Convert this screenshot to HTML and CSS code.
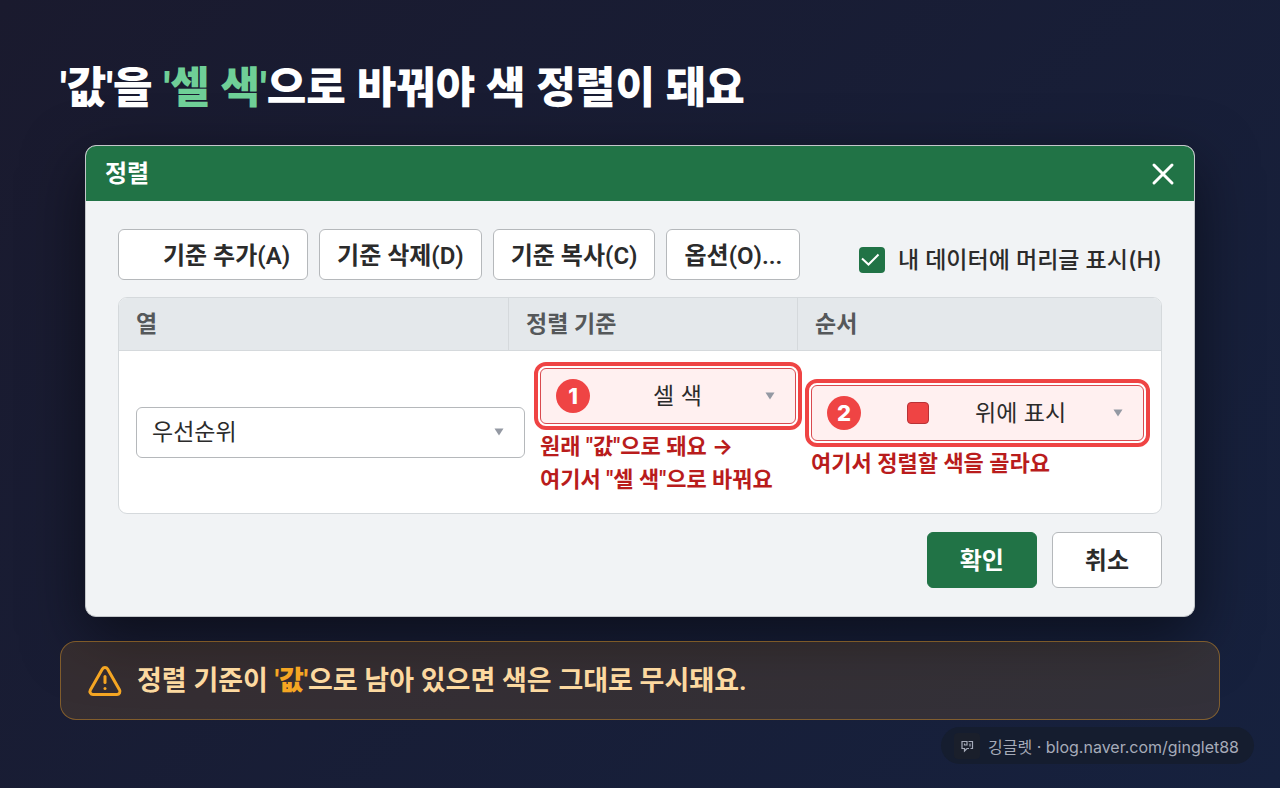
FILE: index.html
```html
<!DOCTYPE html>
<html lang="ko">
<head>
    <meta charset="UTF-8">
    <meta name="viewport" content="width=device-width, initial-scale=1.0">
    <title>셀 색 정렬</title>
    <link rel="stylesheet" href="styles.css">
</head>
<body>
    <main class="page">
        <h1 class="title">'값'을 <span class="green">'셀 색'</span>으로 바꿔야 색 정렬이 돼요</h1>

        <section class="dialog">
            <div class="dialog-head">
                <h2>정렬</h2>
                <button type="button" class="close" aria-label="닫기">
                    <svg width="24" height="24" viewBox="0 0 24 24" fill="none" stroke="currentColor" stroke-width="3" stroke-linecap="round"><path d="M3 3l18 18M21 3L3 21"/></svg>
                </button>
            </div>

            <div class="dialog-body">
                <div class="toolbar">
                    <button type="button" class="btn add">기준 추가(A)</button>
                    <button type="button" class="btn">기준 삭제(D)</button>
                    <button type="button" class="btn">기준 복사(C)</button>
                    <button type="button" class="btn">옵션(O)...</button>
                    <label class="check" for="header-row">
                        <input type="checkbox" id="header-row" checked>
                        내 데이터에 머리글 표시(H)
                    </label>
                </div>

                <table class="rules">
                    <thead>
                        <tr>
                            <th>열</th>
                            <th>정렬 기준</th>
                            <th>순서</th>
                        </tr>
                    </thead>
                    <tbody>
                        <tr>
                            <td>
                                <div class="combo">
                                    <select aria-label="열"><option>우선순위</option></select>
                                    <svg class="arrow" width="10" height="8" viewBox="0 0 10 8"><path d="M0.5 0.5h9L5 7.5z"/></svg>
                                </div>
                            </td>
                            <td>
                                <div class="combo hot">
                                    <span class="num">1</span>
                                    <select aria-label="정렬 기준"><option>셀 색</option></select>
                                    <svg class="arrow" width="10" height="8" viewBox="0 0 10 8"><path d="M0.5 0.5h9L5 7.5z"/></svg>
                                </div>
                                <p class="hint">원래 "값"으로 돼요 →<br>여기서 "셀 색"으로 바꿔요</p>
                            </td>
                            <td>
                                <div class="combo hot">
                                    <span class="num">2</span>
                                    <span class="swatch"></span>
                                    <select aria-label="순서"><option>위에 표시</option></select>
                                    <svg class="arrow" width="10" height="8" viewBox="0 0 10 8"><path d="M0.5 0.5h9L5 7.5z"/></svg>
                                </div>
                                <p class="hint">여기서 정렬할 색을 골라요</p>
                            </td>
                        </tr>
                    </tbody>
                </table>

                <div class="actions">
                    <button type="button" class="btn ok">확인</button>
                    <button type="button" class="btn">취소</button>
                </div>
            </div>
        </section>

        <div class="warning">
            <svg width="36" height="36" viewBox="0 0 24 24" fill="none" stroke="currentColor" stroke-width="2" stroke-linecap="round" stroke-linejoin="round"><path d="m21.73 18-8-14a2 2 0 0 0-3.48 0l-8 14A2 2 0 0 0 4 21h16a2 2 0 0 0 1.73-3"/><path d="M12 9v4"/><path d="M12 17h.01"/></svg>
            <p>정렬 기준이 <strong>'값'</strong>으로 남아 있으면 색은 그대로 무시돼요.</p>
        </div>
    </main>

    <footer class="source">
        <span class="logo">
            <svg width="14" height="14" viewBox="0 0 14 14" fill="none" stroke="currentColor" stroke-width="1.2"><path d="M2 10V2.500H7V6H4.500V4.500M2 9.500H4.500V12L7 9.500H9M8.500 2.500H12.500V9.500H10.500M10 4.500V7.500"/></svg>
        </span>
        <span>깅글렛 · blog.naver.com/ginglet88</span>
    </footer>
</body>
</html>
```

FILE: styles.css
```css
*{
    padding: 0;
    margin: 0;
    box-sizing: border-box;
}
body{
    font-family: "Inter", "Noto Sans CJK KR", sans-serif;
    min-height: 100vh;
    background: linear-gradient(135deg, #1a1a2e, #16213e);
    color: #2b2b2b;
}
button, select{
    font: inherit;
    color: inherit;
    cursor: pointer;
}
.page{
    padding: 60px 60px 68px;
}
.title, .btn, .hint, .warning{
    font-family: "Roboto", "Inter", "Noto Sans CJK KR", sans-serif;
}
.title{
    font-size: 43px;
    line-height: 56px;
    font-weight: 800;
    color: #fff;
    margin-bottom: 29px;
}
.green{
    color: #6fcf97;
}

/* dialog */
.dialog{
    margin: 0 25px 24px;
    border: 1px solid #c4c7ca;
    border-radius: 11px;
    background: #f1f3f5;
    overflow: hidden;
    box-shadow: 0 20px 60px rgba(0, 0, 0, 0.5);
}
.dialog-head{
    display: flex;
    justify-content: space-between;
    align-items: center;
    height: 55px;
    padding: 0 19px;
    background: #217346;
    color: #fff;
}
.dialog-head h2{
    padding-bottom: 4px;
    font-size: 24px;
    font-weight: 700;
}
.close{
    display: flex;
    border: none;
    background: none;
}
.dialog-body{
    padding: 28px 32px;
}
.toolbar{
    display: flex;
    gap: 11px;
    margin-bottom: 17px;
}
.btn{
    height: 51px;
    padding: 0 17px 3px;
    border: 1px solid #b5b8bb;
    border-radius: 6px;
    background: #fff;
    font-size: 24px;
    font-weight: 600;
}
.btn.add{
    padding-left: 44px;
}
.check{
    display: flex;
    align-items: center;
    align-self: flex-end;
    gap: 13px;
    margin-left: auto;
    font-size: 23px;
    font-weight: 500;
    line-height: 40px;
}
.check input{
    appearance: none;
    width: 26px;
    height: 26px;
    border-radius: 4px;
    background: #fff;
}
.check input:checked{
    background: #217346 url("data:image/svg+xml,%3Csvg xmlns='http://www.w3.org/2000/svg' viewBox='0 0 26 26' fill='none' stroke='white' stroke-width='2'%3E%3Cpath d='M3 11.500l6.500 6L19.500 7.500'/%3E%3C/svg%3E");
}

/* rules table */
.rules{
    display: block;
    border: 1px solid #d5d9dc;
    border-radius: 9px;
    background: #fff;
    overflow: hidden;
}
.rules thead, .rules tbody{
    display: block;
}
.rules tr{
    display: grid;
}
.rules thead tr{
    grid-template-columns: 389fr 289fr 364fr;
    background: #e4e8eb;
    border-bottom: 1px solid #d5d9dc;
}
.rules th{
    padding: 0 17px;
    text-align: left;
    font-size: 23px;
    line-height: 52px;
    font-weight: 600;
    color: #55585a;
}
.rules th + th{
    border-left: 1px solid #d5d9dc;
}
.rules tbody tr{
    grid-template-columns: 389fr 256fr 333fr;
    gap: 15px;
    align-items: center;
    padding: 17px;
}
.combo{
    display: flex;
    justify-content: space-between;
    align-items: center;
    height: 51px;
    padding: 0 20px 0 15px;
    border: 1px solid #b5b8bb;
    border-radius: 6px;
    background: #fff;
}
.combo select{
    appearance: none;
    border: none;
    background: none;
    font-size: 23px;
}
.arrow{
    fill: #9499a3;
}
.combo.hot{
    height: 56px;
    border-color: #d94a4f;
    background: #fff0f0;
    outline: 4px solid #ef4444;
    outline-offset: 2px;
}
.num{
    width: 34px;
    height: 34px;
    border-radius: 50%;
    background: #ef4444;
    color: #fff;
    font-size: 22px;
    line-height: 34px;
    font-weight: 800;
    text-align: center;
}
.swatch{
    width: 22px;
    height: 22px;
    border: 1px solid #b83236;
    border-radius: 4px;
    background: #ef4444;
}
.hint{
    margin-top: 6px;
    font-size: 22px;
    line-height: 33px;
    font-weight: 700;
    color: #b91c1c;
    white-space: nowrap;
}
.actions{
    display: flex;
    justify-content: flex-end;
    gap: 15px;
    margin-top: 18px;
}
.actions .btn{
    height: 56px;
    padding: 0 32px 3px;
}
.actions .ok{
    border-color: #217346;
    background: #217346;
    color: #fff;
    font-weight: 700;
}

/* warning bar */
.warning{
    position: relative;
    display: flex;
    align-items: center;
    gap: 14px;
    height: 79px;
    padding: 0 26px;
    border: 1px solid rgba(245, 166, 35, 0.4);
    border-radius: 16px;
    background: rgba(245, 166, 35, 0.13);
    color: #f5a623;
}
.warning p{
    padding-bottom: 4px;
    font-size: 27px;
    font-weight: 600;
    color: #fcd9a0;
}
.warning strong{
    color: #f5a623;
    font-weight: 800;
}

.source{
    position: absolute;
    right: 26px;
    bottom: 24px;
    display: flex;
    align-items: center;
    gap: 8px;
    height: 37px;
    padding: 0 15px 0 13px;
    border-radius: 19px;
    background: #151d2f;
    color: #a6abb9;
    font-size: 16px;
}
.logo{
    display: grid;
    place-items: center;
    width: 26px;
    height: 26px;
    border-radius: 4px;
    background: #1a1f2b;
}
```
